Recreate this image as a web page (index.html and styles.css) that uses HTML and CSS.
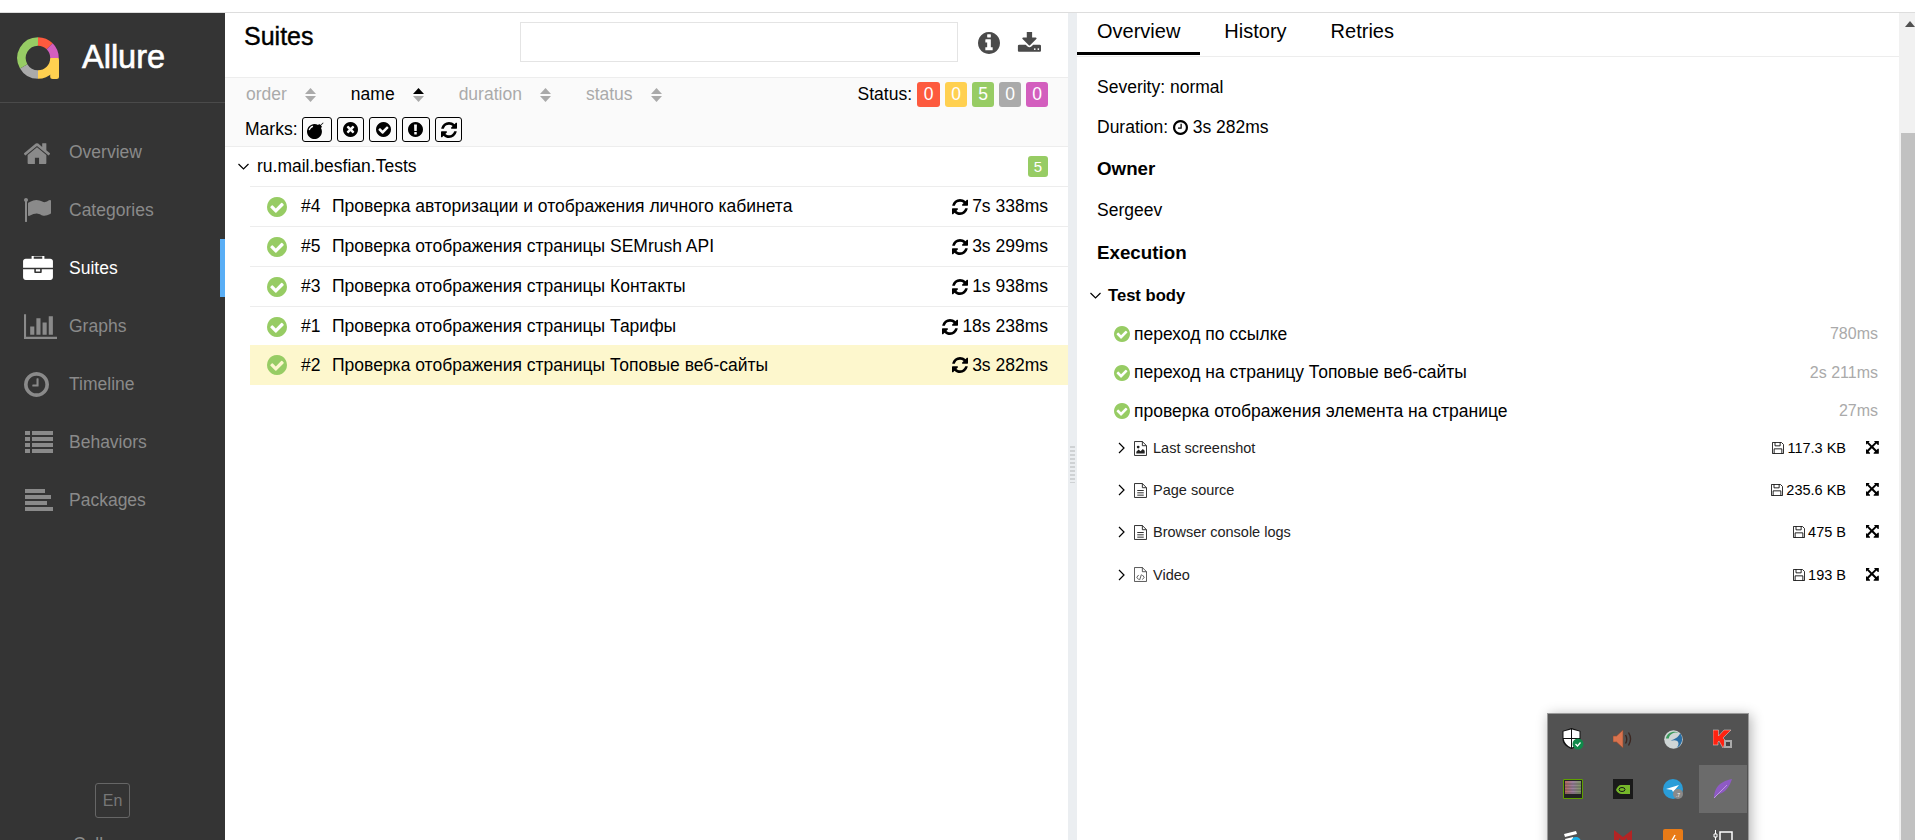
FILE: index.html
```html
<!DOCTYPE html>
<html lang="en">
<head>
  <meta charset="UTF-8" />
  <title>Allure Report</title>
  <link rel="stylesheet" href="styles.css">
</head>
<body>
  <svg class="sprite" width="0" height="0">
    <symbol id="i-home" viewBox="97 128 1600 1400"><path d="M1472 992v480q0 26-19 45t-45 19h-384v-384h-256v384h-384q-26 0-45-19t-19-45v-480q0-1 .5-3t.5-3l575-474 575 474q1 2 1 6zm223-69l-62 74q-8 9-21 11h-3q-13 0-21-7l-692-577-692 577q-12 8-24 7-13-2-21-11l-62-74q-8-10-7-23.5t11-21.5l719-599q32-26 76-26t76 26l244 204v-195q0-14 9-23t23-9h192q14 0 23 9t9 23v408l219 182q10 8 11 21.5t-7 23.5z"/></symbol>
    <symbol id="i-flag" viewBox="64 128 1728 1536"><path d="M320 256q0 72-64 110v1266q0 13-9.5 22.5t-22.5 9.5h-64q-13 0-22.5-9.5t-9.5-22.5v-1266q-64-38-64-110 0-53 37.5-90.5t90.5-37.5 90.5 37.5 37.5 90.5zm1472 64v763q0 25-12.5 38.5t-39.5 27.5q-215 116-369 116-61 0-123.5-22t-108.5-48-115.5-48-142.5-22q-192 0-464 146-17 9-33 9-26 0-45-19t-19-45v-742q0-32 31-55 21-14 79-43 236-120 421-120 107 0 200 29t219 88q38 19 88 19 54 0 117.5-21t110-47 88-47 54.5-21q26 0 45 19t19 45z"/></symbol>
    <symbol id="i-briefcase" viewBox="0 96 1792 1440"><path d="M640 256h512v-128h-512v128zm1152 640v480q0 66-47 113t-113 47h-1472q-66 0-113-47t-47-113v-480h672v160q0 26 19 45t45 19h320q26 0 45-19t19-45v-160h672zm-768 0v128h-256v-128h256zm768-480v384h-1792v-384q0-66 47-113t113-47h352v-160q0-40 28-68t68-28h576q40 0 68 28t28 68v160h352q66 0 113 47t47 113z"/></symbol>
    <symbol id="i-chart" viewBox="0 128 2048 1536"><path d="M640 896v512h-256v-512h256zm384-512v1024h-256v-1024h256zm1024 1152v128h-2048v-1536h128v1408h1920zm-640-896v768h-256v-768h256zm384-384v1152h-256v-1152h256z"/></symbol>
    <symbol id="i-clock" viewBox="128 128 1536 1536"><path d="M1024 544v448q0 14-9 23t-23 9h-320q-14 0-23-9t-9-23v-64q0-14 9-23t23-9h224v-352q0-14 9-23t23-9h64q14 0 23 9t9 23zm416 352q0-148-73-273t-198-198-273-73-273 73-198 198-73 273 73 273 198 198 273 73 273-73 198-198 73-273zm224 0q0 209-103 385.5t-279.5 279.5-385.5 103-385.5-103-279.5-279.5-103-385.5 103-385.5 279.5-279.5 385.5-103 385.5 103 279.5 279.5 103 385.5z"/></symbol>
    <symbol id="i-list" viewBox="0 0 28 22"><path d="M0 0h5v4H0zM7 0h21v4H7zM0 6h5v4H0zM7 6h21v4H7zM0 12h5v4H0zM7 12h21v4H7zM0 18h5v4H0zM7 18h21v4H7z"/></symbol>
    <symbol id="i-packages" viewBox="0 0 28 22"><path d="M0 0h20v4H0zM0 6h26v4H0zM0 12h22v4H0zM0 18h28v4H0z"/></symbol>
    <symbol id="i-info" viewBox="128 128 1536 1536"><path d="M1152 1376v-160q0-14-9-23t-23-9h-96v-512q0-14-9-23t-23-9h-320q-14 0-23 9t-9 23v160q0 14 9 23t23 9h96v320h-96q-14 0-23 9t-9 23v160q0 14 9 23t23 9h448q14 0 23-9t9-23zm-128-896v-160q0-14-9-23t-23-9h-192q-14 0-23 9t-9 23v160q0 14 9 23t23 9h192q14 0 23-9t9-23zm640 416q0 209-103 385.5t-279.5 279.5-385.5 103-385.5-103-279.5-279.5-103-385.5 103-385.5 279.5-279.5 385.5-103 385.5 103 279.5 279.5 103 385.5z"/></symbol>
    <symbol id="i-download" viewBox="0 128 1728 1408"><path d="M1344 1344q0-26-19-45t-45-19-45 19-19 45 19 45 45 19 45-19 19-45zm256 0q0-26-19-45t-45-19-45 19-19 45 19 45 45 19 45-19 19-45zm128-224v320q0 40-28 68t-68 28h-1472q-40 0-68-28t-28-68v-320q0-40 28-68t68-28h465l135 136q58 56 136 56t136-56l136-136h464q40 0 68 28t28 68zm-325-569q17 41-14 70l-448 448q-18 19-45 19t-45-19l-448-448q-31-29-14-70 17-39 59-39h256v-448q0-26 19-45t45-19h256q26 0 45 19t19 45v448h256q42 0 59 39z"/></symbol>
    <symbol id="i-check" viewBox="128 128 1536 1536"><path d="M1412 734q0-28-18-46l-91-90q-19-19-45-19t-45 19l-408 407-226-226q-19-19-45-19t-45 19l-91 90q-18 18-18 46 0 27 18 45l362 362q19 19 45 19 27 0 46-19l543-543q18-18 18-45zm252 162q0 209-103 385.5t-279.5 279.5-385.5 103-385.5-103-279.5-279.5-103-385.5 103-385.5 279.5-279.5 385.5-103 385.5 103 279.5 279.5 103 385.5z"/></symbol>
    <symbol id="i-times" viewBox="128 128 1536 1536"><path d="M1277 1122q0-26-19-45l-181-181 181-181q19-19 19-45 0-27-19-46l-90-90q-19-19-46-19-26 0-45 19l-181 181-181-181q-19-19-45-19-27 0-46 19l-90 90q-19 19-19 46 0 26 19 45l181 181-181 181q-19 19-19 45 0 27 19 46l90 90q19 19 46 19 26 0 45-19l181-181 181 181q19 19 45 19 27 0 46-19l90-90q19-19 19-46zm387-226q0 209-103 385.5t-279.5 279.5-385.5 103-385.5-103-279.5-279.5-103-385.5 103-385.5 279.5-279.5 385.5-103 385.5 103 279.5 279.5 103 385.5z"/></symbol>
    <symbol id="i-exclaim" viewBox="128 128 1536 1536"><path d="M896 128q209 0 385.5 103t279.5 279.5 103 385.5-103 385.5-279.5 279.5-385.5 103-385.5-103-279.5-279.5-103-385.5 103-385.5 279.5-279.5 385.5-103zm128 1247v-190q0-14-9-23.5t-22-9.5h-192q-13 0-23 10t-10 23v190q0 13 10 23t23 10h192q13 0 22-9.5t9-23.5zm-2-344l18-621q0-12-10-18-10-8-24-8h-220q-14 0-24 8-10 6-10 18l17 621q0 10 10 17.5t24 7.5h185q14 0 23.5-7.5t10.5-17.5z"/></symbol>
    <symbol id="i-bomb" viewBox="0 0 1792 1792"><path d="M571 589q-10-25-34-35t-49 0q-108 44-191 127t-127 191q-10 25 0 49t35 34q13 5 24 5 42 0 60-40 34-84 98.5-148.5t148.5-98.5q25-11 35-35t0-49zm942-356l46 46-244 243 68 68q19 19 19 45.5t-19 45.5l-64 64q89 161 89 343 0 143-55.5 273.5t-150 225-225 150-273.5 55.5-273.5-55.5-225-150-150-225-55.5-273.5 55.5-273.5 150-225 225-150 273.5-55.5q182 0 343 89l64-64q19-19 45.5-19t45.5 19l68 68z"/></symbol>
    <symbol id="i-refresh" viewBox="128 128 1536 1536"><path d="M1639 1056q0 5-1 7-64 268-268 434.5t-478 166.5q-146 0-282.5-55t-243.5-157l-129 129q-19 19-45 19t-45-19-19-45v-448q0-26 19-45t45-19h448q26 0 45 19t19 45-19 45l-137 137q71 66 161 102t187 36q134 0 250-65t186-179q11-17 53-117 8-23 30-23h192q13 0 22.5 9.5t9.5 22.5zm25-800v448q0 26-19 45t-45 19h-448q-26 0-45-19t-19-45 19-45l138-138q-148-137-349-137-134 0-250 65t-186 179q-11 17-53 117-8 23-30 23h-199q-13 0-22.5-9.5t-9.5-22.5v-7q65-268 270-434.5t480-166.5q146 0 284 55.5t245 156.5l130-129q19-19 45-19t45 19 19 45z"/></symbol>
    <symbol id="i-expand" viewBox="128 128 1536 1536"><path d="M1283 413l-355 355 355 355 144-144q29-31 70-14 39 17 39 59v448q0 26-19 45t-45 19h-448q-42 0-59-40-17-39 14-69l144-144-355-355-355 355 144 144q31 30 14 69-17 40-59 40h-448q-26 0-45-19t-19-45v-448q0-42 40-59 39-17 69 14l144 144 355-355-355-355-144 144q-19 19-45 19-12 0-24-5-40-17-40-59v-448q0-26 19-45t45-19h448q42 0 59 40 17 39-14 69l-144 144 355 355 355-355-144-144q-31-30-14-69 17-40 59-40h448q26 0 45 19t19 45v448q0 42-39 59-13 5-25 5-26 0-45-19z"/></symbol>
    <symbol id="i-floppy" viewBox="0 0 14 14"><path d="M.5.5h10.5l2.5 2.5v10.5H.5z M3.5.5v4h6v-4 M2.5 13.5v-5.5h9v5.5" fill="none" stroke="currentColor"/></symbol>
    <symbol id="i-file-image" viewBox="0 0 14 16"><path d="M.5.5h8.5l4.5 4.5v10.5H.5z M9 .5V5h4.5" fill="none" stroke="currentColor"/><path d="M2.5 13.5v-2l2.5-2.5 2 2 2.500-2.500 2 2v3z"/><circle cx="4.500" cy="6.500" r="1.500"/></symbol>
    <symbol id="i-file-text" viewBox="0 0 14 16"><path d="M.5.5h8.5l4.5 4.5v10.5H.5z M9 .5V5h4.5 M3.500 8h7 M3.500 10.500h7 M3.500 13h7" fill="none" stroke="currentColor"/></symbol>
    <symbol id="i-file-code" viewBox="0 0 14 16"><path d="M.5.5h8.5l4.5 4.5v10.5H.5z M9 .5V5h4.5 M5 8.500l-2 2.500 2 2.500 M9 8.500l2 2.500-2 2.500 M8 8l-2 6" fill="none" stroke="currentColor" stroke-width=".8"/></symbol>
  </svg>

  <div class="topline"></div>

  <div class="app">
    <aside class="side">
      <div class="brand">
        <svg class="brand-logo" viewBox="0 0 42 42" fill="none" stroke-width="8.500">
          <path d="M21 4.500A16.500 16.500 0 0 1 32.670 9.330" stroke="#fd5a3e"/>
          <path d="M32.670 9.330A16.500 16.500 0 0 1 37.500 21" stroke="#d35ebe"/>
          <path d="M37.500 21A16.500 16.500 0 0 1 21 37.500" stroke="#ffd050"/>
          <path d="M21 37.500A16.500 16.500 0 0 1 6.710 29.250" stroke="#aaa"/>
          <path d="M6.710 29.250A16.500 16.500 0 0 1 21 4.500" stroke="#97cc64"/>
          <rect x="33.200" y="21" width="8.800" height="21" rx="2.500" fill="#ffd050" stroke="none"/>
        </svg>
        <span class="brand-name">Allure</span>
      </div>
      <nav class="nav">
        <a class="nav-item"><span class="nav-icon"><svg width="26" height="23"><use href="#i-home"/></svg></span>Overview</a>
        <a class="nav-item"><span class="nav-icon"><svg width="27" height="24"><use href="#i-flag"/></svg></span>Categories</a>
        <a class="nav-item active"><span class="nav-icon"><svg class="shift" width="30" height="24"><use href="#i-briefcase"/></svg></span>Suites</a>
        <a class="nav-item"><span class="nav-icon"><svg width="33" height="25"><use href="#i-chart"/></svg></span>Graphs</a>
        <a class="nav-item"><span class="nav-icon"><svg width="25" height="25"><use href="#i-clock"/></svg></span>Timeline</a>
        <a class="nav-item"><span class="nav-icon"><svg width="30" height="22"><use href="#i-list"/></svg></span>Behaviors</a>
        <a class="nav-item"><span class="nav-icon"><svg width="30" height="22"><use href="#i-packages"/></svg></span>Packages</a>
      </nav>
      <div class="side-foot">
        <div class="lang">En</div>
        <div class="collapse"><span class="collapse-arrow">&#8592;</span>Collapse</div>
      </div>
    </aside>

    <section class="suites">
      <div class="suites-head">
        <h2 class="title">Suites</h2>
        <div class="search"></div>
        <svg class="tool info" width="22" height="22"><use href="#i-info"/></svg>
        <svg class="tool" width="24" height="20"><use href="#i-download"/></svg>
      </div>

      <div class="toolbar">
        <div class="toolbar-row">
          <span class="sort">order<svg class="sort-icon" viewBox="0 0 11 14"><path d="M5.500 0L11 6H0z"/><path d="M5.500 14L0 8h11z"/></svg></span>
          <span class="sort on">name<svg class="sort-icon" viewBox="0 0 11 14"><path class="up" d="M5.500 0L11 6H0z"/><path d="M5.500 14L0 8h11z"/></svg></span>
          <span class="sort">duration<svg class="sort-icon" viewBox="0 0 11 14"><path d="M5.500 0L11 6H0z"/><path d="M5.500 14L0 8h11z"/></svg></span>
          <span class="sort">status<svg class="sort-icon" viewBox="0 0 11 14"><path d="M5.500 0L11 6H0z"/><path d="M5.500 14L0 8h11z"/></svg></span>
          <div class="statuses">
            <span class="status-label">Status:</span>
            <span class="badge failed">0</span>
            <span class="badge broken">0</span>
            <span class="badge passed">5</span>
            <span class="badge skipped">0</span>
            <span class="badge unknown">0</span>
          </div>
        </div>
        <div class="toolbar-row marks">
          <span class="marks-label">Marks:</span>
          <span class="mark wide"><svg width="19" height="19"><use href="#i-bomb"/></svg></span>
          <span class="mark"><svg width="15" height="15"><use href="#i-times"/></svg></span>
          <span class="mark"><svg width="15" height="15"><use href="#i-check"/></svg></span>
          <span class="mark"><svg width="15" height="15"><use href="#i-exclaim"/></svg></span>
          <span class="mark"><svg width="16" height="16"><use href="#i-refresh"/></svg></span>
        </div>
      </div>

      <div class="group">
        <svg class="chevron down" viewBox="0 0 12 8"><path d="M1 1l5 5 5-5"/></svg>
        <span class="group-name">ru.mail.besfian.Tests</span>
        <span class="badge passed small">5</span>
      </div>

      <div class="rows">
        <div class="row">
          <svg class="pass" width="20" height="20"><use href="#i-check"/></svg>
          <span class="num">#4</span><span>Проверка авторизации и отображения личного кабинета</span>
          <span class="dur"><svg width="16" height="16"><use href="#i-refresh"/></svg>7s 338ms</span>
        </div>
        <div class="row">
          <svg class="pass" width="20" height="20"><use href="#i-check"/></svg>
          <span class="num">#5</span><span>Проверка отображения страницы SEMrush API</span>
          <span class="dur"><svg width="16" height="16"><use href="#i-refresh"/></svg>3s 299ms</span>
        </div>
        <div class="row">
          <svg class="pass" width="20" height="20"><use href="#i-check"/></svg>
          <span class="num">#3</span><span>Проверка отображения страницы Контакты</span>
          <span class="dur"><svg width="16" height="16"><use href="#i-refresh"/></svg>1s 938ms</span>
        </div>
        <div class="row">
          <svg class="pass" width="20" height="20"><use href="#i-check"/></svg>
          <span class="num">#1</span><span>Проверка отображения страницы Тарифы</span>
          <span class="dur"><svg width="16" height="16"><use href="#i-refresh"/></svg>18s 238ms</span>
        </div>
        <div class="row selected">
          <svg class="pass" width="20" height="20"><use href="#i-check"/></svg>
          <span class="num">#2</span><span>Проверка отображения страницы Топовые веб-сайты</span>
          <span class="dur"><svg width="16" height="16"><use href="#i-refresh"/></svg>3s 282ms</span>
        </div>
      </div>
    </section>

    <div class="gutter"><div class="grip"></div></div>

    <section class="details">
      <div class="tabs">
        <span class="tab active">Overview</span>
        <span class="tab">History</span>
        <span class="tab">Retries</span>
      </div>
      <div class="details-body">
        <div class="field">Severity: normal</div>
        <div class="field">Duration: <svg class="inline-clock" width="15" height="15"><use href="#i-clock"/></svg> 3s 282ms</div>
        <h3 class="heading">Owner</h3>
        <div class="field owner">Sergeev</div>
        <h3 class="heading">Execution</h3>
        <div class="stage">
          <svg class="chevron down" viewBox="0 0 12 8"><path d="M1 1l5 5 5-5"/></svg>Test body
        </div>
        <div class="step"><svg class="pass" width="16" height="16"><use href="#i-check"/></svg>переход по ссылке<span class="step-time">780ms</span></div>
        <div class="step"><svg class="pass" width="16" height="16"><use href="#i-check"/></svg>переход на страницу Топовые веб-сайты<span class="step-time">2s 211ms</span></div>
        <div class="step"><svg class="pass" width="16" height="16"><use href="#i-check"/></svg>проверка отображения элемента на странице<span class="step-time">27ms</span></div>
        <div class="attachments">
          <div class="attachment">
            <svg class="chevron right" viewBox="0 0 8 12"><path d="M1 1l5 5-5 5"/></svg>
            <svg class="file" width="13" height="15"><use href="#i-file-image"/></svg>Last screenshot
            <span class="size"><svg width="12" height="12"><use href="#i-floppy"/></svg>117.3 KB</span>
            <svg class="expand" width="14" height="14"><use href="#i-expand"/></svg>
          </div>
          <div class="attachment">
            <svg class="chevron right" viewBox="0 0 8 12"><path d="M1 1l5 5-5 5"/></svg>
            <svg class="file" width="13" height="15"><use href="#i-file-text"/></svg>Page source
            <span class="size"><svg width="12" height="12"><use href="#i-floppy"/></svg>235.6 KB</span>
            <svg class="expand" width="14" height="14"><use href="#i-expand"/></svg>
          </div>
          <div class="attachment">
            <svg class="chevron right" viewBox="0 0 8 12"><path d="M1 1l5 5-5 5"/></svg>
            <svg class="file" width="13" height="15"><use href="#i-file-text"/></svg>Browser console logs
            <span class="size"><svg width="12" height="12"><use href="#i-floppy"/></svg>475 B</span>
            <svg class="expand" width="14" height="14"><use href="#i-expand"/></svg>
          </div>
          <div class="attachment">
            <svg class="chevron right" viewBox="0 0 8 12"><path d="M1 1l5 5-5 5"/></svg>
            <svg class="file" width="13" height="15"><use href="#i-file-code"/></svg>Video
            <span class="size"><svg width="12" height="12"><use href="#i-floppy"/></svg>193 B</span>
            <svg class="expand" width="14" height="14"><use href="#i-expand"/></svg>
          </div>
        </div>
      </div>
    </section>

    <div class="scrollbar">
      <div class="scroll-arrow"></div>
      <div class="scroll-thumb"></div>
    </div>
  </div>

  <div class="tray">
    <div class="tray-cell">
      <svg width="22" height="22" viewBox="0 0 22 22">
        <path d="M9.500 0l9 3v8c0 5-4 8-9 10-5-2-9-5-9-10V3z" fill="#111"/>
        <path d="M9 1.500v8.500H1.500V3.500zM10 1.500l7.500 2V10H10zM1.700 11H9v8.500c-4-2-6.500-4.500-7.300-8.500zM10 11h7.300c-.8 4-3.300 6.500-7.300 8.500z" fill="#fff"/>
        <circle cx="16" cy="16" r="5.500" fill="#0f8a4a"/>
        <path d="M13.500 16l2 2 3-3.500" fill="none" stroke="#fff" stroke-width="1.200"/>
      </svg>
    </div>
    <div class="tray-cell">
      <svg width="20" height="20" viewBox="0 0 20 20">
        <path d="M0 7h3.500L10 1v18l-6.500-6H0z" fill="#d9734e" stroke="#8a4a30" stroke-width=".6"/>
        <path d="M12.500 6c1.500 2.500 1.500 6 0 8.500M15.500 3.500c2.500 4 2.500 9 0 13" fill="none" stroke="#3b2620" stroke-width="1.400"/>
      </svg>
    </div>
    <div class="tray-cell">
      <svg width="19" height="19" viewBox="0 0 20 20">
        <circle cx="10" cy="10" r="9.800" fill="#cfd6d6"/>
        <path d="M2 9C3 3 10 0 16 3 11 2 6 4 5 9z" fill="#3d9a5d"/>
        <path d="M17 3.500c4 5 2 13-4 15.500 2.500-2.500 3-5.500 1-7.500-2.500-1.500-5-.5-7-.5 4-1 8-3 10-7.500z" fill="#2a6fa5"/>
      </svg>
    </div>
    <div class="tray-cell">
      <svg width="20" height="20" viewBox="0 0 20 20">
        <path d="M0 1h5.500v6L11 1h7l-8 8 3 3-3 7-4-7-1 1v3H0z" fill="#f21" stroke="#ddd" stroke-width=".5"/>
        <path d="M11 11h8v8h-8z" fill="#aaa"/>
        <path d="M13 13h4v4h-4z" fill="#444"/>
      </svg>
    </div>
    <div class="tray-cell">
      <svg width="20" height="20" viewBox="0 0 20 20">
        <defs>
          <linearGradient id="pal" x1="0" x2="1" y1="0" y2="0">
            <stop offset="0" stop-color="#b5685e"/>
            <stop offset=".5" stop-color="#9c7fa0"/>
            <stop offset="1" stop-color="#7f9a5e"/>
          </linearGradient>
        </defs>
        <path d="M.5.5h19v19H.5z" fill="#222" stroke="#5fa000"/>
        <path d="M2 2h16v13H2z" fill="url(#pal)"/>
        <path d="M2 5h16M2 8h16M2 11h16M2 14h16" stroke="#444" stroke-width=".6"/>
      </svg>
    </div>
    <div class="tray-cell">
      <svg width="20" height="20" viewBox="0 0 20 20">
        <path d="M0 0h20v20H0z" fill="#1a1a1a"/>
        <path d="M8 6h9v9H9c-3 0-5-2-6-4 1-3 3-5 5-5z" fill="#76b82a"/>
        <ellipse cx="9" cy="10.500" rx="3" ry="2" fill="none" stroke="#1a1a1a"/>
      </svg>
    </div>
    <div class="tray-cell">
      <svg width="20" height="20" viewBox="0 0 20 20">
        <circle cx="10" cy="10" r="10" fill="#2a9dd8"/>
        <path d="M3 10l13-4-6 7-1-2z" fill="#fff"/>
        <circle cx="15" cy="15" r="5" fill="#8a8a8a"/>
        <text class="tray-count" x="15" y="17.500">.7</text>
      </svg>
    </div>
    <div class="tray-cell hover">
      <svg width="20" height="20" viewBox="0 0 20 20">
        <path d="M19 0C13 1 6 4 3 10 2 12 1 15 1 18l1 1c1-2 2-3 4-4 6-1 11-8 13-15z" fill="#8e5ac4"/>
        <path d="M1 19L14 6" stroke="#c9a8e8" stroke-width=".8"/>
      </svg>
    </div>
    <div class="tray-cell">
      <svg width="20" height="20" viewBox="0 0 20 20">
        <path d="M1 5l12-3 1 3-12 3zM2 10l8-2 1 3-8 2z" fill="#fff"/>
        <circle cx="13" cy="13" r="5" fill="#19aee6"/>
      </svg>
    </div>
    <div class="tray-cell">
      <svg width="20" height="20" viewBox="0 0 20 20">
        <path d="M1 1l9 7 9-7v17h-5V9l-4 4-4-4v9H1z" fill="#b32424"/>
      </svg>
    </div>
    <div class="tray-cell">
      <svg width="20" height="20" viewBox="0 0 20 20">
        <rect width="20" height="20" rx="2" fill="#e87b17"/>
        <path d="M7 15l5-9M9 15l4-5" stroke="#fff" stroke-width="1.400"/>
      </svg>
    </div>
    <div class="tray-cell">
      <svg width="20" height="20" viewBox="0 0 20 20">
        <path d="M7 3h12v12H7z" fill="none" stroke="#fff" stroke-width="1.500"/>
        <path d="M1 5v3h3V5zM2.500 1v4M2.500 8v5h4" fill="none" stroke="#fff"/>
      </svg>
    </div>
  </div>
</body>
</html>
```
FILE: styles.css
```css
:root {
  --side-bg: #343434;
  --side-text: #8a8a8a;
  --line: #ededed;
  --passed: #97cc64;
  --failed: #fd5a3e;
  --broken: #ffd050;
  --skipped: #aaa;
  --unknown: #d35ebe;
}

* {
  box-sizing: border-box;
}

html, body {
  margin: 0;
  height: 840px;
  overflow: hidden;
}

body {
  font-family: "Liberation Sans", Arial, sans-serif;
  font-size: 17.5px;
  color: #000;
  background: #fff;
  position: relative;
}

.sprite {
  position: absolute;
}

.topline {
  height: 13px;
  border-bottom: 1px solid #ddd;
}

.app {
  display: flex;
  height: 827px;
}

/* sidebar */
.side {
  flex: 0 0 225px;
  display: flex;
  flex-direction: column;
  background: var(--side-bg);
  overflow: hidden;
}

.brand {
  flex: 0 0 90px;
  display: flex;
  align-items: center;
  padding: 0 0 0 17px;
  border-bottom: 1px solid #4a4a4a;
}

.brand-logo {
  width: 42px;
  height: 42px;
}

.brand-name {
  margin-left: 23px;
  font-size: 32.5px;
  color: #fff;
  -webkit-text-stroke: 0.6px #fff;
}

.nav {
  padding-top: 20px;
}

.nav-item {
  display: flex;
  align-items: center;
  height: 58px;
  color: var(--side-text);
}

.nav-icon {
  flex: 0 0 69px;
  display: flex;
  align-items: center;
  padding-left: 24px;
}

.nav-icon svg {
  fill: currentColor;
}

.nav-icon .shift {
  margin-left: -1px;
}

.nav-item.active {
  color: #fff;
  border-right: 5px solid #59aef5;
}

.side-foot {
  margin-top: auto;
  height: 57px;
}

.lang {
  width: 35px;
  height: 35px;
  margin-left: 95px;
  display: flex;
  align-items: center;
  justify-content: center;
  border: 1px solid #666;
  border-radius: 3px;
  color: #777;
  font-size: 16px;
}

.collapse {
  margin-top: 16px;
  color: var(--side-text);
  line-height: 20px;
}

.collapse-arrow {
  display: inline-block;
  width: 73px;
  padding-left: 33px;
}

/* suites list */
.suites {
  flex: 0 0 843px;
}

.suites-head {
  display: flex;
  height: 64px;
}

.title {
  flex: 0 0 295px;
  margin: 0;
  padding: 9px 0 0 19px;
  font-size: 25px;
  font-weight: normal;
  -webkit-text-stroke: 0.4px #000;
  line-height: 28px;
}

.search {
  width: 438px;
  height: 40px;
  margin-top: 9px;
  border: 1px solid #e4e4e4;
}

.tool {
  margin-top: 19px;
  fill: #4a4a4a;
}

.tool.info {
  margin-left: 20px;
  margin-right: 17px;
}

.toolbar {
  height: 70px;
  padding: 4px 20px 4px 21px;
  background: #fafafa;
  border-top: 1px solid var(--line);
  border-bottom: 1px solid var(--line);
}

.toolbar-row {
  display: flex;
  align-items: center;
  height: 25px;
}

.marks {
  margin-top: 10px;
  margin-left: -1px;
}

.sort {
  display: flex;
  align-items: center;
  margin-right: 35px;
  color: #aaa;
}

.sort.on {
  color: #000;
}

.sort-icon {
  width: 11px;
  height: 14px;
  margin-left: 18px;
  fill: #aaa;
}

.sort-icon .up {
  fill: #000;
}

.statuses {
  display: flex;
  align-items: center;
  gap: 5px;
  margin-left: auto;
}

.badge {
  display: flex;
  align-items: center;
  justify-content: center;
  width: 22px;
  height: 25px;
  border-radius: 3px;
  color: #fff;
  font-size: 17.5px;
}

.badge.failed {
  width: 23px;
}

.failed { background: var(--failed); }
.broken { background: var(--broken); }
.passed { background: var(--passed); }
.skipped { background: var(--skipped); }
.unknown { background: var(--unknown); }

.badge.small {
  width: 20px;
  height: 21px;
  margin-left: auto;
  font-size: 15px;
}

.marks-label {
  margin-right: 4px;
}

.mark {
  display: flex;
  align-items: center;
  justify-content: center;
  width: 27.5px;
  height: 25px;
  margin-right: 5.3px;
  border: 1px solid #000;
  border-radius: 3px;
}

.mark.wide {
  width: 30px;
  margin-right: 5px;
}

.chevron {
  flex: none;
  fill: none;
  stroke: #000;
  stroke-width: 1.2;
}

.chevron.down {
  width: 13px;
  height: 8px;
}

.chevron.right {
  width: 8px;
  height: 12px;
}

.group {
  display: flex;
  align-items: center;
  height: 39px;
  padding: 0 20px 0 12px;
}

.group-name {
  margin-left: 7px;
}

.rows {
  margin-left: 25px;
}

.row {
  display: flex;
  align-items: center;
  height: 40px;
  padding: 0 20px 0 17px;
  border-top: 1px solid var(--line);
}

.row.selected {
  margin-top: -1px;
  background: #fdf7cd;
  border-top: 0;
}

.pass {
  flex: none;
  fill: var(--passed);
}

.row .pass {
  margin-right: 14px;
}

.num {
  flex: 0 0 31px;
}

.dur {
  display: flex;
  align-items: center;
  gap: 4px;
  margin-left: auto;
}

/* gutter */
.gutter {
  flex: 0 0 9px;
  background: #ebeef1;
  padding: 432px 2px 0;
}

.grip {
  height: 38px;
  background: radial-gradient(circle, #cfd2d4 1.2px, transparent 1.5px) 0 0 / 3px 4px;
}

/* details pane */
.details {
  flex: 1;
}

.tabs {
  display: flex;
  gap: 4px;
  height: 44px;
  border-bottom: 1px solid var(--line);
  font-size: 20px;
}

.tab {
  padding: 0 20px;
  line-height: 36px;
  height: 42px;
}

.tab.active {
  border-bottom: 3px solid #000;
}

.details-body {
  padding: 10px 19px 0 20px;
}

.field {
  height: 40px;
  line-height: 40px;
}

.owner {
  height: 42px;
  line-height: 42px;
}

.inline-clock {
  vertical-align: -2px;
}

.heading {
  height: 42px;
  margin: 0;
  line-height: 44px;
  font-size: 18.75px;
}

.stage {
  display: flex;
  align-items: center;
  gap: 6px;
  height: 38px;
  margin: 4px 0 0 -8px;
  font-size: 16.6px;
  font-weight: bold;
}

.step {
  display: flex;
  align-items: center;
  height: 38.5px;
  padding-left: 17px;
}

.step .pass {
  margin-right: 4px;
}

.step-time {
  margin-left: auto;
  margin-right: 2px;
  color: #aaa;
  font-size: 16px;
}

.attachments {
  margin-top: -3.5px;
}

.attachment {
  display: flex;
  align-items: center;
  height: 42.2px;
  padding-left: 21px;
  font-size: 14.5px;
  color: #222;
}

.file {
  margin: 0 6px 0 8px;
  fill: #222;
}

.size {
  display: flex;
  align-items: center;
  gap: 3px;
  margin-left: auto;
  margin-right: 20px;
  color: #000;
}

.expand {
  flex: none;
}

.scrollbar {
  flex: 0 0 16px;
  padding-left: 2px;
  background: #f1f1f1;
}

.scroll-arrow {
  width: 0;
  height: 0;
  margin: 8px 0 0 4px;
  border-left: 5px solid transparent;
  border-right: 5px solid transparent;
  border-bottom: 6px solid #505050;
}

.scroll-thumb {
  height: 707px;
  margin-top: 106px;
  background: #c1c1c1;
}

/* windows tray flyout, sits on top of the page */
.tray {
  position: absolute;
  left: 1547px;
  top: 713px;
  width: 202px;
  height: 140px;
  display: grid;
  grid-template-columns: repeat(4, 50px);
  grid-auto-rows: 50px;
  background: #525252;
  border: 1px solid #999;
  box-shadow: 2px 2px 12px rgba(0, 0, 0, 0.3);
}

.tray-cell {
  display: flex;
  align-items: center;
  justify-content: center;
  margin: 1px;
}

.tray-cell.hover {
  background: #6b6b6b;
}

.tray-count {
  font-size: 5px;
  fill: #fff;
  text-anchor: middle;
}
```
